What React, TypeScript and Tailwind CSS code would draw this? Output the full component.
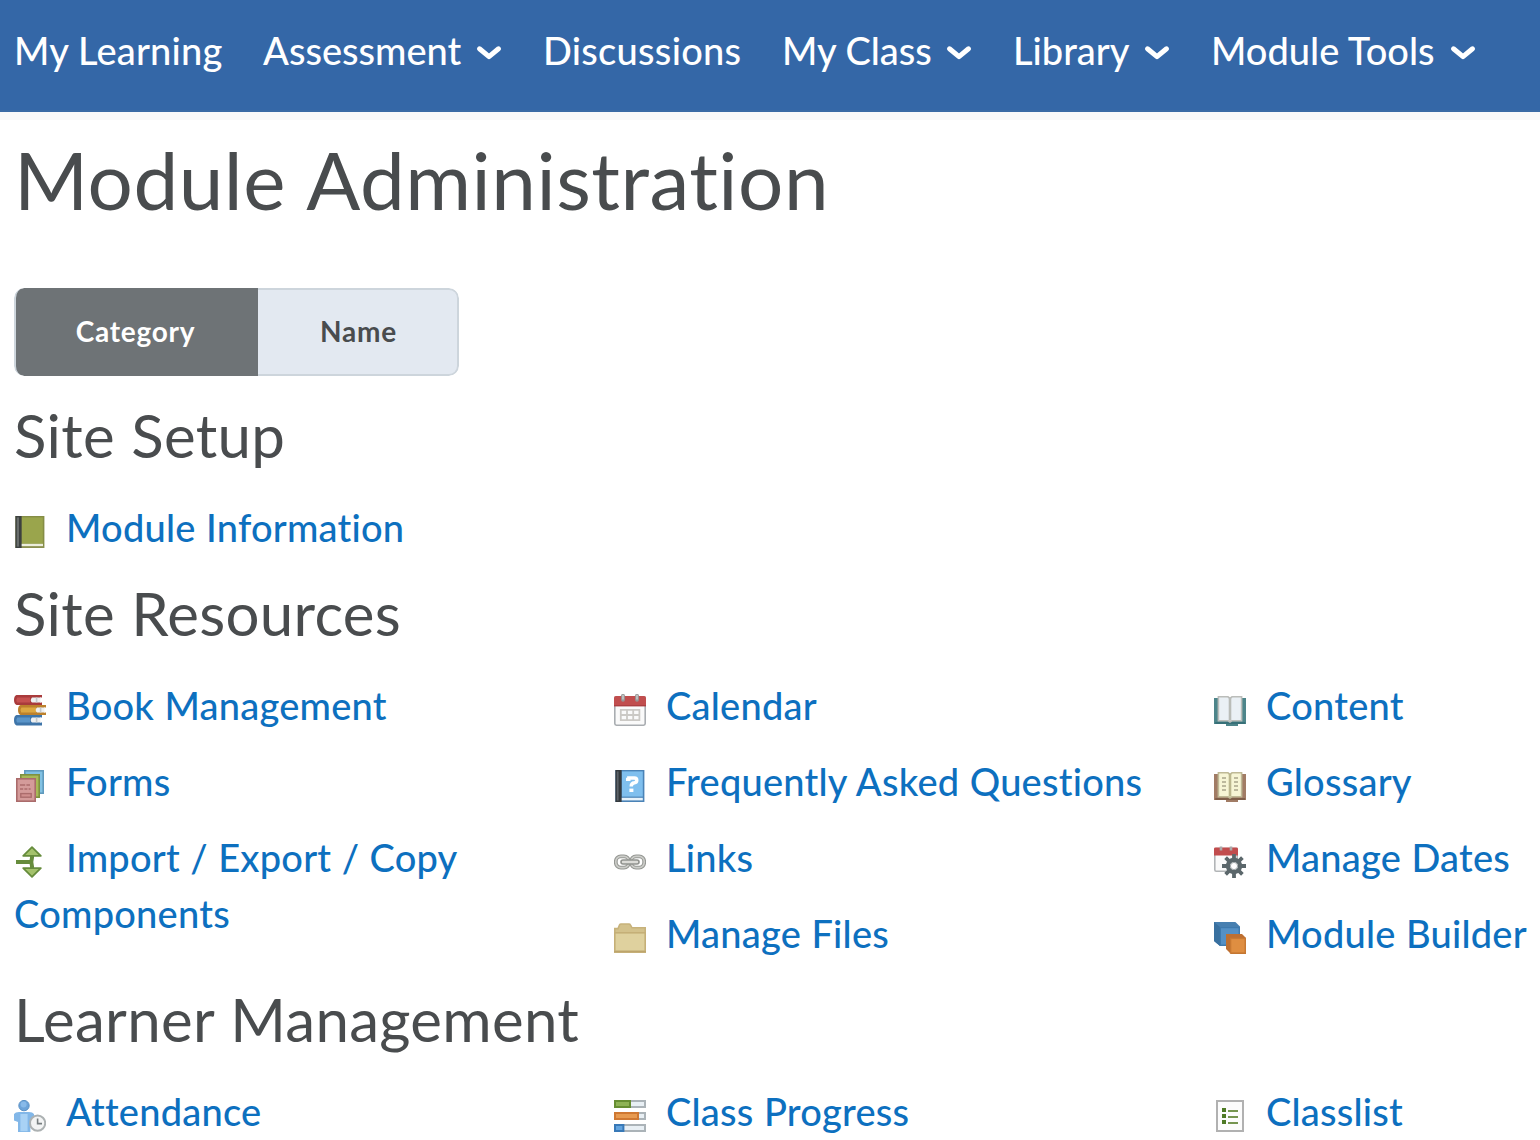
import type { ReactNode } from "react";

const icons: Record<string, ReactNode> = {
  moduleInfo: (
    <>
      <rect x=".7" y="0" width="14.500" height="16" fill="#858d45" />
      <rect x="3.800" y=".7" width="10.600" height="13.100" fill="#9aa54c" />
      <rect x="3" y="13.900" width="11.500" height="1.300" fill="#eceddc" />
      <rect x="3" y="15.200" width="12" height=".8" fill="#8a8f50" />
      <rect x=".7" y="0" width="3.100" height="16" fill="#3c403f" />
      <rect x="1.400" y=".7" width="1.100" height="14.600" fill="#686d6b" />
    </>
  ),
  books: (
    <>
      <path d="M1.200.5H14v1.200h-1v2.600h1v1.200H1.300Q0 5 0 3T1.200.5Z" fill="#a93b3c" />
      <path d="M1.600 1.700H8v2.500H1.500q-.8-1.300.1-2.500Z" fill="#c65150" />
      <path d="M9 1.700h4.500q-.8 1.200 0 2.600H9q-1.300-1.200 0-2.600Z" fill="#eef0f1" />
      <path d="M3.200 5.500H16v1.200h-1v2.600h1v1.200H3.200Q2 10 2 8t1.200-2.500Z" fill="#bd812c" />
      <path d="M3.700 6.700H11v2.600H3.600q-.8-1.300.1-2.600Z" fill="#dda842" />
      <path d="M11.500 6.700h4q-.8 1.300 0 2.600h-4q-1.300-1.300 0-2.600Z" fill="#eef0f1" />
      <path d="M1.200 10.500H14v1.200h-1v2.600h1v1.400H1.300Q0 15.200 0 13.100t1.200-2.600Z" fill="#3f75a9" />
      <path d="M1.600 11.700H8v2.600H1.500q-.8-1.300.1-2.600Z" fill="#5a95c9" />
      <path d="M9 11.700h4.500q-.8 1.300 0 2.600H9q-1.300-1.300 0-2.600Z" fill="#eef0f1" />
      <path d="M11.300 1.700v2.600M13.300 6.700v2.600M11.300 11.700v2.600" stroke="#c4c9cc" strokeWidth=".8" />
    </>
  ),
  forms: (
    <>
      <rect x="5.400" y=".4" width="9.200" height="11.200" fill="#82c2e4" stroke="#609abd" strokeWidth=".8" />
      <rect x="3.400" y="2.400" width="9.200" height="11.200" fill="#a8b957" stroke="#7d9140" strokeWidth=".8" />
      <rect x="1.400" y="4.400" width="9.200" height="11.200" fill="#d49b9a" stroke="#aa6b6b" strokeWidth=".8" />
      <path d="M3 7.500h2.600M6.200 7.500H8M3 9.500h1.600M5.200 9.500h1.500M7.300 9.500h1" stroke="#ab6c6c" strokeWidth=".8" />
      <rect x="3.400" y="11.800" width="5.200" height="1.800" fill="#d08f8e" stroke="#ab6c6c" strokeWidth=".7" />
    </>
  ),
  transfer: (
    <>
      <path d="M1 8h7.800M9 4.500v1.300Q8.300 8 9 10.200v1.300" stroke="#668c3c" strokeWidth="2" fill="none" />
      <path d="M9 .6 13.400 4.900H4.600ZM9 15.400l4.400-4.300H4.600Z" fill="#a4c26c" stroke="#668c3c" strokeWidth=".9" strokeLinejoin="round" />
    </>
  ),
  calendar: (
    <>
      <rect x=".4" y="1.400" width="15.200" height="14.200" rx=".8" fill="#fafafa" stroke="#a9adb1" strokeWidth=".8" />
      <path d="M0 6V2q0-1 1-1h14q1 0 1 1v4Z" fill="#c14e4e" />
      <path d="M0 5.600h16v.6H0Z" fill="#a73d3f" />
      <path d="M4.500.9v2M11.500.9v2" stroke="#969696" strokeWidth="1.900" strokeLinecap="round" />
      <path d="M4.500.4v2.300M11.500.4v2.300" stroke="#cfcfcf" strokeWidth=".7" />
      <path d="M3 7.900h10M3 10.500h10M3 13.100h10M3.400 7.500v6M6.500 7.500v6M9.600 7.500v6M12.700 7.500v6" stroke="#cbc9c5" strokeWidth=".9" />
    </>
  ),
  faq: (
    <>
      <rect x=".7" y="0" width="14.500" height="16" fill="#4a83b7" />
      <rect x="3.900" y=".7" width="10.500" height="12.600" fill="#7fbfee" />
      <rect x="3.600" y="13.900" width="10.800" height="1.300" fill="#e7f2fa" />
      <rect x=".7" y="0" width="3.100" height="16" fill="#34393d" />
      <rect x="1.400" y=".7" width=".9" height="14.600" fill="#5b6268" />
      <path d="M6 4.700h1.400V4h2.800q1.200 0 1.200 1.100T10.200 6.400q-1.600.2-1.600 1.900" stroke="#fff" strokeWidth="1.700" fill="none" />
      <rect x="7.700" y="9.300" width="2" height="1.700" fill="#fff" />
    </>
  ),
  links: (
    <>
      <rect x=".9" y="5.200" width="6.600" height="5.600" rx="2.500" fill="none" stroke="#969894" strokeWidth="1.900" />
      <rect x="8.500" y="5.200" width="6.600" height="5.600" rx="2.500" fill="none" stroke="#969894" strokeWidth="1.900" />
      <rect x=".9" y="5.200" width="6.600" height="5.600" rx="2.500" fill="none" stroke="#cccdc9" strokeWidth=".8" />
      <rect x="8.500" y="5.200" width="6.600" height="5.600" rx="2.500" fill="none" stroke="#cccdc9" strokeWidth=".8" />
      <rect x="3.500" y="7" width="9" height="2" rx="1" fill="#dcdcd8" stroke="#90928e" strokeWidth=".8" />
    </>
  ),
  folder: (
    <>
      <path d="M.4 15.100V3.300H2l.8-1.900q.2-.4.700-.4h4q.5 0 .7.400l.8 1.500h6.600v12.200Z" fill="#d3c18b" stroke="#c7b27b" strokeWidth=".8" />
      <rect x=".4" y="5.400" width="15.200" height="9.200" fill="#dfd19e" stroke="#c5af77" strokeWidth=".8" />
      <path d="M0 14.800h16" stroke="#bda46c" strokeWidth=".6" />
    </>
  ),
  content: (
    <>
      <path d="M0 2h16v13h-4v1H6v-1H0Z" fill="#4d858a" />
      <path d="M.6 14.500h15" stroke="#2f6870" strokeWidth=".7" />
      <path d="M2.200 1.400H7l1 .8 1-.8h4.800v12H9l-1 .6-1-.6H2.200Z" fill="#eaf0f5" stroke="#bbbdba" strokeWidth=".8" />
      <path d="M8 1.800v11.500" stroke="#b9bcb8" strokeWidth="1.300" />
    </>
  ),
  glossary: (
    <>
      <path d="M0 2h16v13h-4v1H6v-1H0Z" fill="#a17c65" />
      <path d="M.6 14.500h15" stroke="#775844" strokeWidth=".8" />
      <path d="M2.200 1.400H7l1 .8 1-.8h4.800v12H9l-1 .6-1-.6H2.200Z" fill="#f7f5d5" stroke="#bfb996" strokeWidth=".8" />
      <path d="M8 1.800v11.500" stroke="#bcb78e" strokeWidth="1.300" />
      <path d="M4 4h2M4 6h2M4 8h2M4 10h2M10 4h2M10 6h2M10 8h2M10 10h2" stroke="#aaa58a" strokeWidth=".8" />
    </>
  ),
  dates: (
    <>
      <rect x=".4" y="1.300" width="11.200" height="11.300" rx=".7" fill="#fafafa" stroke="#b2b5b7" strokeWidth=".8" />
      <path d="M0 4.800V1.500q0-.7.700-.7h10.600q.7 0 .7.700v3.300Z" fill="#c14c4d" />
      <path d="M3.500.2v2M8.500.2v2" stroke="#aaa" strokeWidth="1.300" />
      <g transform="translate(10 10)">
        <path d="M0-6V6M-6 0H6M-4.200-4.200 4.200 4.200M4.200-4.200-4.200 4.200" stroke="#5b676b" strokeWidth="1.900" />
        <circle r="3" fill="#fff" stroke="#5b676b" strokeWidth="2.200" />
        <circle r="1.800" fill="#fff" stroke="#a1a8aa" strokeWidth=".5" />
      </g>
    </>
  ),
  builder: (
    <>
      <path d="M0 0h10.700L13 2.300V12H3L0 9.500Z" fill="#477fb0" />
      <path d="M0 0 3 2.500V12L0 9.500Z" fill="#39709f" />
      <rect x="3.200" y="2.800" width="9.400" height="8.800" fill="#5490c5" stroke="#3d79ad" strokeWidth=".6" />
      <path d="M6 6h8l2 2v8H8.500L6 13.500Z" fill="#bd6f31" />
      <rect x="8.300" y="8.200" width="7.300" height="7.300" fill="#df8e41" stroke="#c87932" strokeWidth=".7" />
    </>
  ),
  attendance: (
    <>
      <path d="M0 7q.7-1 2.500-1h5Q9.300 6 10 7v3.500L8.200 11v5H2v-5L0 10.300Z" fill="#82b7e8" />
      <path d="M3.200 7h3.600v8.600H3.200Z" fill="#a9d2f5" />
      <circle cx="5" cy="2.800" r="2.600" fill="#6da4d9" stroke="#5a91c6" strokeWidth=".5" />
      <circle cx="4.800" cy="2.300" r="1.500" fill="#88bae9" />
      <circle cx="11.800" cy="11.600" r="3.800" fill="#f3f4f4" stroke="#acb1b2" strokeWidth="1" />
      <path d="M11.800 9.200v2.600h2.200" stroke="#777e80" strokeWidth=".8" fill="none" />
    </>
  ),
  progress: (
    <>
      <rect x=".5" y=".5" width="15" height="3" fill="#e8eff4" stroke="#abb3b8" />
      <rect x=".5" y=".5" width="7.500" height="3" fill="#8eb355" stroke="#668e32" />
      <rect x=".5" y="6.500" width="15" height="3" fill="#e8eff4" stroke="#abb3b8" />
      <rect x=".5" y="6.500" width="11.500" height="3" fill="#e79a50" stroke="#cf7832" />
      <rect x=".5" y="12.500" width="15" height="3" fill="#e8eff4" stroke="#abb3b8" />
      <rect x=".5" y="12.500" width="4.200" height="3" fill="#62a4df" stroke="#3879b7" />
    </>
  ),
  classlist: (
    <>
      <rect x="1.500" y=".5" width="13" height="15" fill="#fcfcfc" stroke="#b1b1b1" />
      <path d="M7 5.500h5M7 8.500h5M7 11.500h5" stroke="#769550" strokeWidth="1.100" />
      <path d="M4 4h2v2H4ZM4 7h2v2H4ZM4 10h2v2H4Z" fill="#4e7a25" />
    </>
  ),
};

type Entry = { icon: string; label: string };

const nav = [
  { label: "My Learning", style: "w-[249px] tracking-[0.2px]", menu: false },
  { label: "Assessment", style: "w-[280px] gap-4", menu: true },
  { label: "Discussions", style: "w-[239px] tracking-[0.27px]", menu: false },
  { label: "My Class", style: "w-[231px] gap-[15px]", menu: true },
  { label: "Library", style: "w-[198px] gap-4", menu: true },
  { label: "Module Tools", style: "w-[270px] gap-[17px]", menu: true },
];

const sections: { title: string; columns: Entry[][] }[] = [
  { title: "Site Setup", columns: [[{ icon: "moduleInfo", label: "Module Information" }]] },
  {
    title: "Site Resources",
    columns: [
      [
        { icon: "books", label: "Book Management" },
        { icon: "forms", label: "Forms" },
        { icon: "transfer", label: "Import / Export / Copy Components" },
      ],
      [
        { icon: "calendar", label: "Calendar" },
        { icon: "faq", label: "Frequently Asked Questions" },
        { icon: "links", label: "Links" },
        { icon: "folder", label: "Manage Files" },
      ],
      [
        { icon: "content", label: "Content" },
        { icon: "glossary", label: "Glossary" },
        { icon: "dates", label: "Manage Dates" },
        { icon: "builder", label: "Module Builder" },
      ],
    ],
  },
  {
    title: "Learner Management",
    columns: [
      [{ icon: "attendance", label: "Attendance" }],
      [{ icon: "progress", label: "Class Progress" }],
      [{ icon: "classlist", label: "Classlist" }],
    ],
  },
];

function Chevron() {
  return (
    <svg viewBox="0 0 24 14" className="mt-[5px] h-[14px] w-6 shrink-0 overflow-visible" fill="none">
      <path d="M2.500 2.800 12 10.600l9.500-7.800" stroke="#fff" strokeWidth="5" strokeLinecap="round" strokeLinejoin="round" />
    </svg>
  );
}

function ToolLink({ icon, label }: Entry) {
  return (
    <li className="w-[550px]">
      <a href="#" className="block text-[38px] leading-[56px] font-medium tracking-[0.23px] text-[#0d70bf] [word-spacing:0.5px]">
        <svg viewBox="0 0 16 16" className="mt-[17px] mr-5 inline-block h-8 w-8 align-top">
          {icons[icon]}
        </svg>
        {label}
      </a>
    </li>
  );
}

export default function App() {
  return (
    <div className="h-[1140px] w-[1540px] overflow-hidden bg-white font-['Lato',sans-serif] text-[#494c4e]">
      <nav className="flex h-[112px] border-b-2 border-[#3b6ba5] bg-[#3467a7] pl-[14px] text-[38px] leading-[52px] font-medium text-white">
        {nav.map((item) => (
          <a key={item.label} href="#" className={`mt-[24px] flex h-[52px] shrink-0 items-center whitespace-nowrap ${item.style}`}>
            {item.label}
            {item.menu && <Chevron />}
          </a>
        ))}
      </nav>
      <div className="h-2 bg-[#f9f9f9]" />
      <main className="pl-[14px]">
        <h1 className="mt-[11px] h-[157px] text-[80px] leading-[96px] tracking-[0.5px] whitespace-nowrap [word-spacing:2px]">Module Administration</h1>
        <div className="flex h-[88px] w-[445px] overflow-hidden rounded-[10px] text-[28px] font-bold tracking-[0.75px]">
          <button className="w-[244px] rounded-l-[10px] border-l-2 border-[#cdd5dc] bg-[#6e7376] pr-[3px] pb-0.5 text-white">Category</button>
          <button className="w-[201px] rounded-r-[10px] border-2 border-l-0 border-[#cdd5dc] bg-[#e3e9f1] pb-0.5 pl-0.5">Name</button>
        </div>
        <div className="mt-[21px]">
          {sections.map((section) => (
            <section key={section.title}>
              <h2 className="h-[102px] text-[60px] leading-[76px] tracking-[0.3px] whitespace-nowrap [word-spacing:0.7px]">{section.title}</h2>
              <div className="grid w-[1800px] grid-cols-3">
                {section.columns.map((column, i) => (
                  <ul key={i} className="flex flex-col gap-5 pb-5">
                    {column.map((entry) => (
                      <ToolLink key={entry.label} {...entry} />
                    ))}
                  </ul>
                ))}
              </div>
            </section>
          ))}
        </div>
      </main>
    </div>
  );
}
